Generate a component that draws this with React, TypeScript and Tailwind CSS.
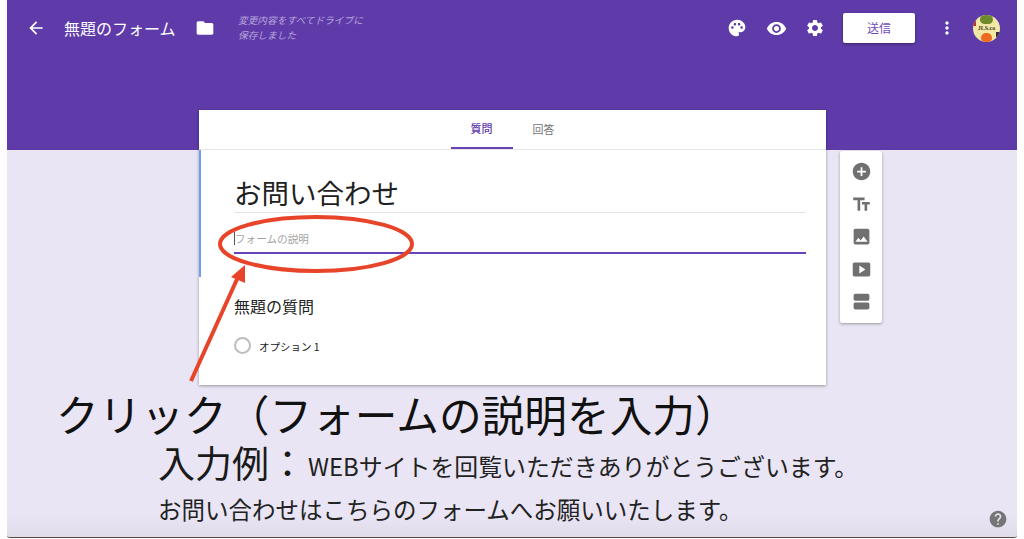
import {
  MdAddCircle,
  MdArrowBack,
  MdFolder,
  MdHelp,
  MdImage,
  MdMoreVert,
  MdPalette,
  MdSettings,
  MdSmartDisplay,
  MdTextFields,
  MdViewAgenda,
  MdVisibility,
} from "react-icons/md";

const JP = "font-['Noto_Sans_CJK_JP','Noto_Sans',sans-serif]";

function Avatar() {
  return (
    <div className="relative ml-[16px] flex h-[27px] w-[27px] items-center justify-center overflow-hidden rounded-full bg-[#f3e7a6]">
      <div className="absolute left-[7px] top-0 h-[9px] w-[13px] rounded-full bg-[#6f8a2e]" />
      <div className="absolute bottom-[-1px] left-[8px] h-[10px] w-[11px] rounded-full bg-[#ee6a22]" />
      <div className="absolute bottom-[5px] right-0 h-[5px] w-[4px] bg-[#333333]" />
      <div className="absolute left-0 top-[6px] h-[5px] w-[3px] bg-[#b5352a]" />
      <span className="relative font-['Liberation_Serif',serif] text-[6px] font-bold leading-none text-[#3b3a20]">
        JLS.co
      </span>
    </div>
  );
}

function TopBar() {
  return (
    <div className="flex h-[56px] items-center text-white">
      <MdArrowBack className="ml-[19px] h-[20px] w-[20px]" />
      <span className="ml-[18px] w-[112px] whitespace-nowrap text-[16px] leading-none">無題のフォーム</span>
      <MdFolder className="ml-[19px] h-[20px] w-[20px]" />
      <div className="ml-[23px] w-[140px] text-[9.7px] italic leading-[15px] text-[#b6a5dc]">
        <div className="whitespace-nowrap">変更内容をすべてドライブに</div>
        <div className="whitespace-nowrap">保存しました</div>
      </div>
      <div className="ml-auto flex items-center">
        <MdPalette className="h-[20px] w-[20px]" />
        <MdVisibility className="ml-[19px] h-[21px] w-[21px]" />
        <MdSettings className="ml-[18px] h-[20px] w-[20px]" />
        <button className="ml-[18px] h-[30px] w-[72px] rounded-[2px] bg-white text-[12px] text-[#6f4bb8] shadow-[0_1px_3px_rgba(0,0,0,0.4)]">
          送信
        </button>
        <MdMoreVert className="ml-[22px] h-[20px] w-[20px]" />
        <Avatar />
        <div className="w-[17px]" />
      </div>
    </div>
  );
}

function Tabs() {
  return (
    <div className="flex h-[40px] justify-center border-b border-[#e6e6e6] text-[11px]">
      <div className="flex w-[62px] items-center justify-center border-b-2 border-[#6843b5] font-medium text-[#5f3ba9]">
        質問
      </div>
      <div className="flex w-[62px] items-center justify-center text-[#757575]">回答</div>
    </div>
  );
}

function FormCard() {
  return (
    <div className="w-[627px] bg-white shadow-[0_1px_3px_rgba(0,0,0,0.35)]">
      <Tabs />
      <div className="flex">
        <div className="h-[127px] w-[2px] bg-[#6f9cf5]" />
        <div className="ml-[33px] w-[572px]">
          <div className="flex h-[63px] items-end border-b border-[#e2e2e2] text-[27.5px] leading-[40px] text-[#212121]">
            お問い合わせ
          </div>
          <div className="flex h-[41px] items-center border-b-2 border-[#6843b5] pt-[12px] text-[10.6px] text-[#a3a3a3]">
            <span className="h-[13px] w-px bg-[#555555]" />
            フォームの説明
          </div>
        </div>
      </div>
      <div className="ml-[35px] mt-[17px] text-[16px] leading-[24px] text-[#212121]">無題の質問</div>
      <div className="ml-[35px] mt-[18px] flex h-[49px] items-start text-[10.5px] leading-[20px] text-[#212121]">
        <span className="mt-px h-[17px] w-[17px] rounded-full border-2 border-[#bdbdbd]" />
        <span className="ml-[8px] mt-[1px]">オプション 1</span>
      </div>
    </div>
  );
}

function Toolbar() {
  const cls = "h-[21px] w-[21px] text-[#707070]";
  return (
    <div className="ml-[14px] mt-[41px] flex h-[172px] w-[42px] flex-col items-center gap-[11.5px] rounded-[2px] bg-white pt-[10px] shadow-[0_1px_3px_rgba(0,0,0,0.35)]">
      <MdAddCircle className={cls} />
      <MdTextFields className={cls} />
      <MdImage className={cls} />
      <MdSmartDisplay className={cls} />
      <MdViewAgenda className={cls} />
    </div>
  );
}

function Annotations() {
  return (
    <>
      <svg className="absolute left-0 top-0 h-[539px] w-[1024px]" viewBox="0 0 1024 539" fill="none">
        <ellipse cx="316" cy="244" rx="96" ry="27" stroke="#e8442a" strokeWidth="4" />
        <line x1="191" y1="381" x2="238" y2="277" stroke="#e8442a" strokeWidth="4" />
        <polygon points="245,265 231,277 245,283" fill="#e8442a" />
      </svg>
      <div className="absolute left-[56px] top-[391px] whitespace-nowrap text-[42.7px] leading-[44px] text-[#111111]">
        クリック（フォームの説明を入力）
      </div>
      <div className="absolute left-[158px] top-[442px] whitespace-nowrap text-[37px] leading-[40px] text-[#1a1a1a]">
        入力例：
      </div>
      <div className="absolute left-[308px] top-[449px] whitespace-nowrap text-[23.9px] leading-[34px] text-[#222222]">
        WEBサイトを回覧いただきありがとうございます。
      </div>
      <div className="absolute left-[158px] top-[489px] whitespace-nowrap text-[23.5px] leading-[40px] text-[#222222]">
        お問い合わせはこちらのフォームへお願いいたします。
      </div>
      <MdHelp className="absolute left-[988px] top-[509px] h-[20px] w-[20px] text-[#757575]" />
    </>
  );
}

export default function App() {
  return (
    <div className={`relative h-[539px] w-[1024px] overflow-hidden bg-white pl-[7px] pr-[7px] ${JP}`}>
      <div className="h-[538px] rounded-b-[3px] border-b border-[#5a4a42] bg-[linear-gradient(#5f3ba9_150px,#e9e5f4_150px,#e9e5f4_515px,#dfdbe9_538px)]">
        <TopBar />
        <div className="ml-[192px] mt-[54px] flex items-start">
          <FormCard />
          <Toolbar />
        </div>
      </div>
      <Annotations />
    </div>
  );
}
